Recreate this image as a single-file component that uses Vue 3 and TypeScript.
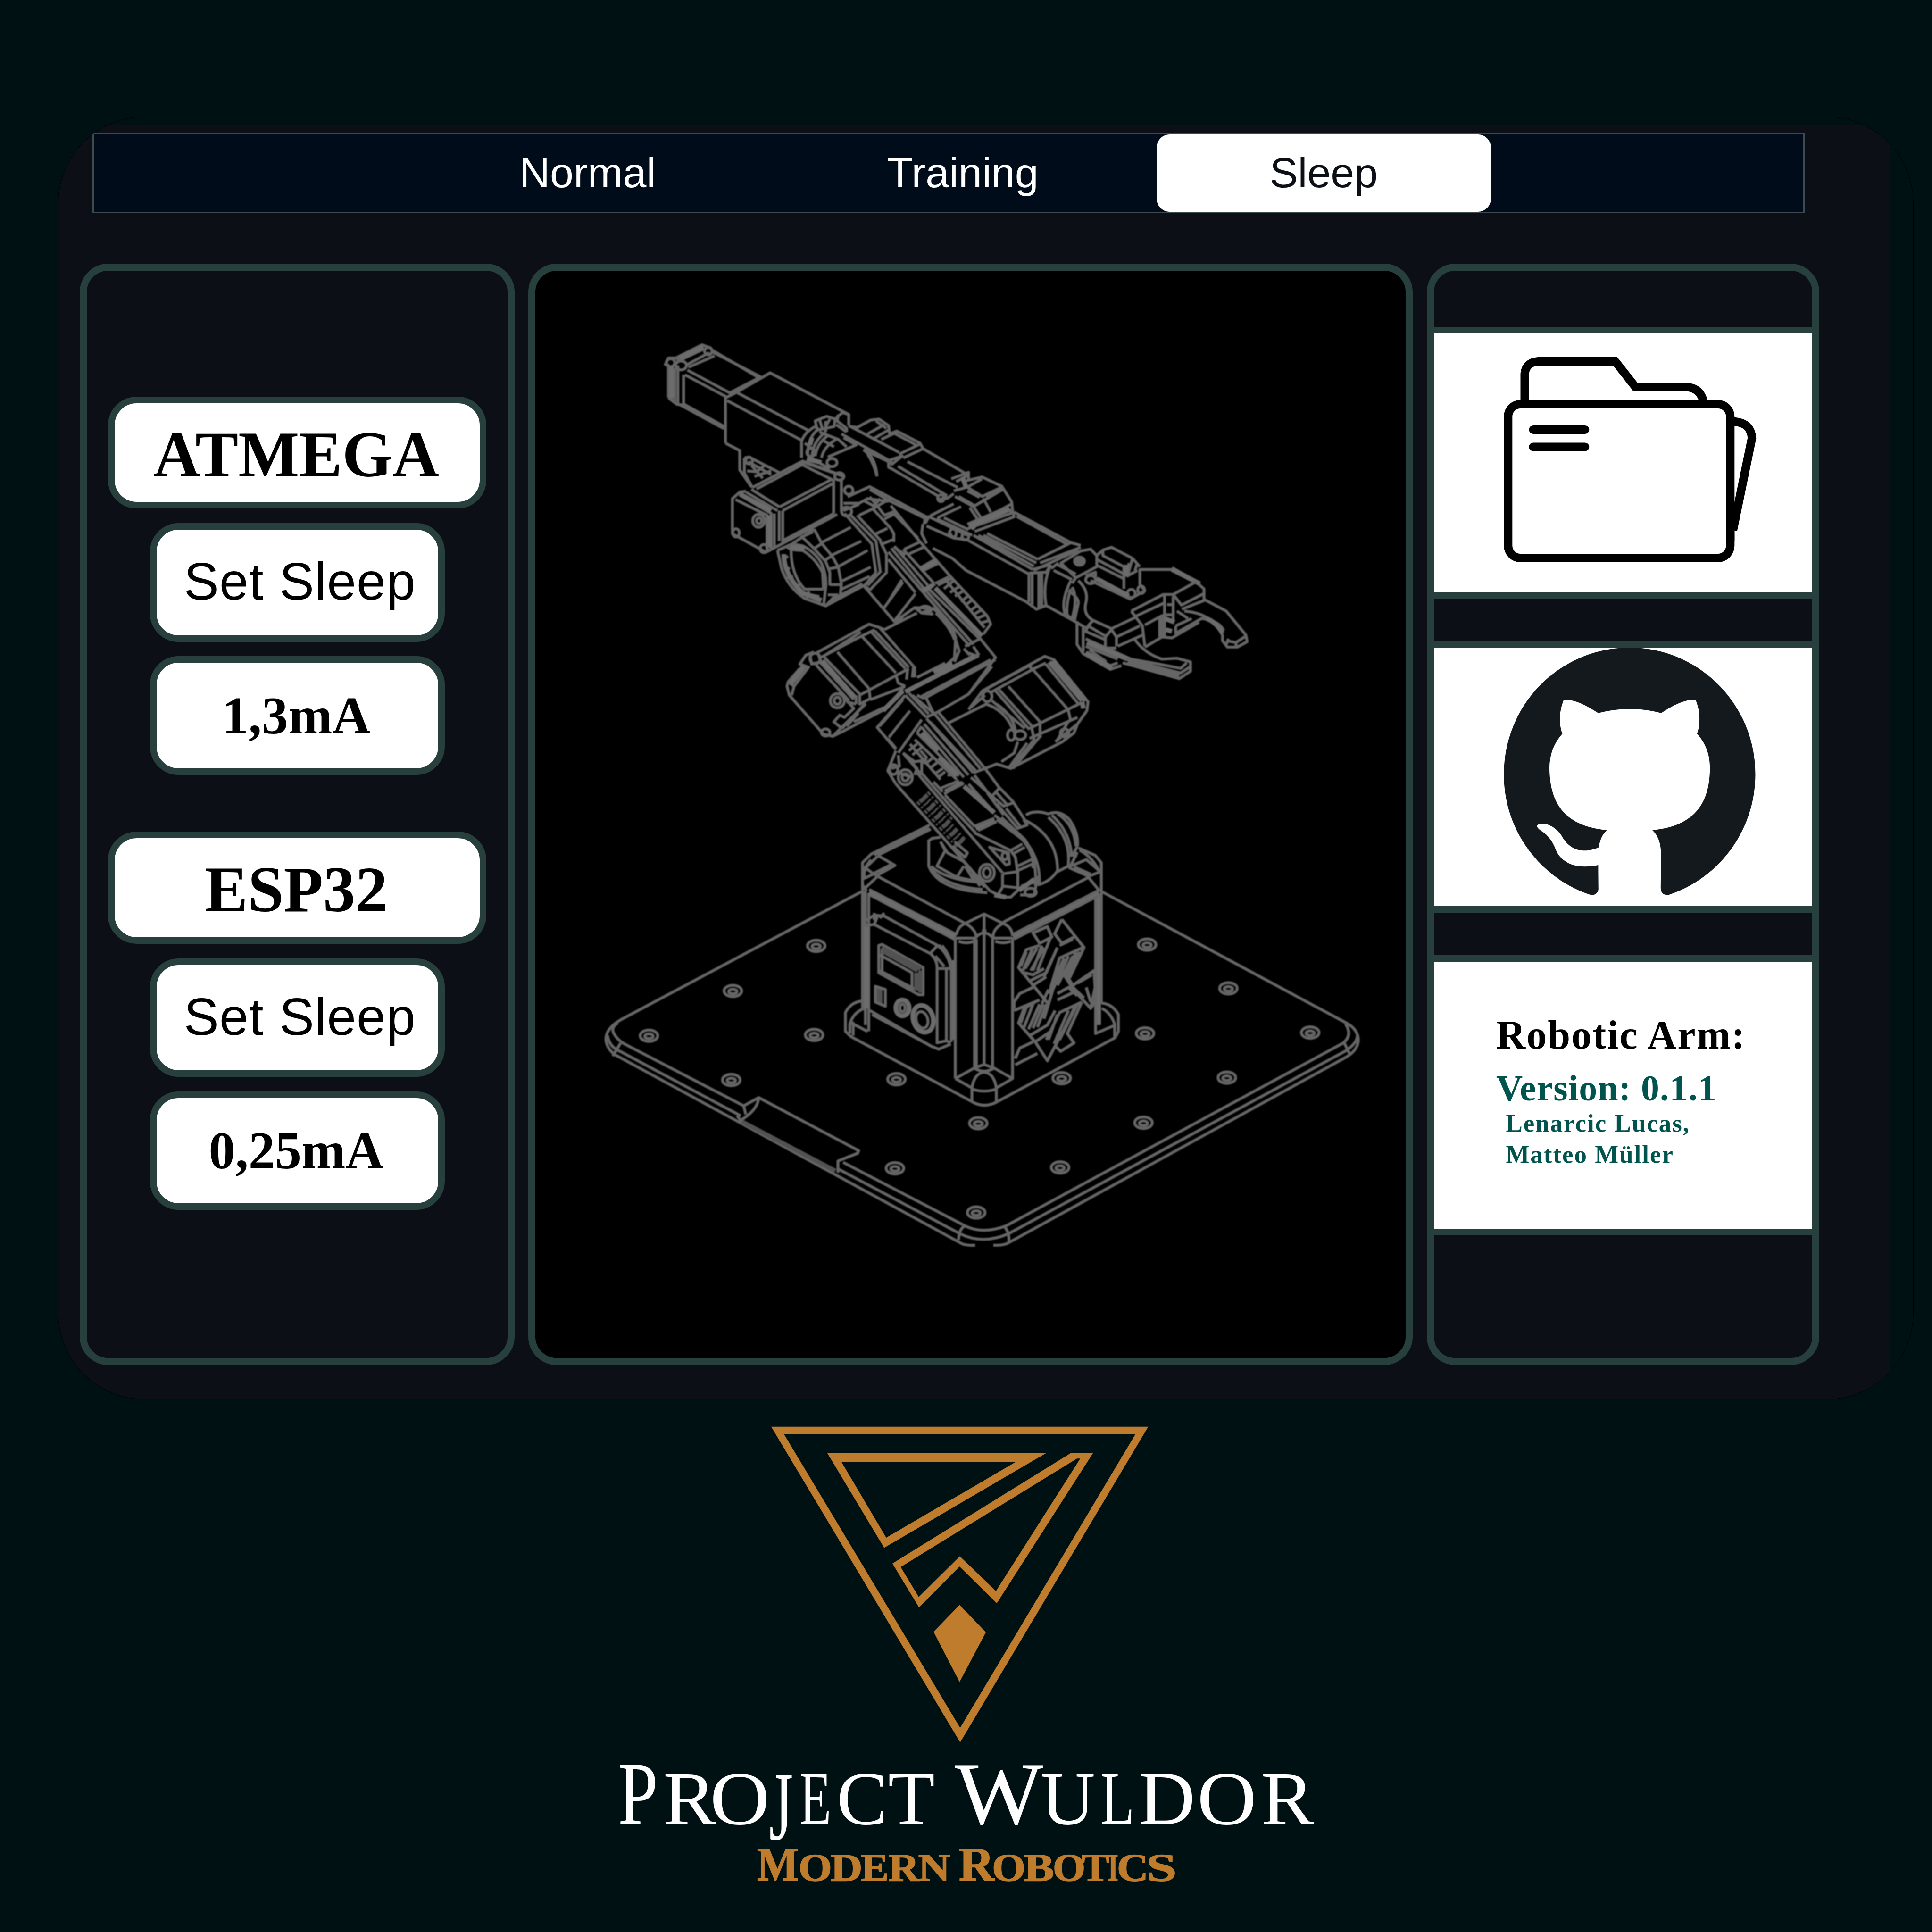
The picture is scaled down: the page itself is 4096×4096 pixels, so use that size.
<script setup lang="ts">
interface Glyph { c: string; x: number; w: number; s: number; y?: number }
interface Unit { name: string; action: string; current: string }

const modes: string[] = ['Normal', 'Training', 'Sleep']
const active = 'Sleep'

const units: Unit[] = [
  { name: 'ATMEGA', action: 'Set Sleep', current: '1,3mA' },
  { name: 'ESP32', action: 'Set Sleep', current: '0,25mA' },
]

const title: Glyph[] = [
  { c: 'P', x: 1599, w: 104, s: 231 }, { c: 'R', x: 1716, w: 137, s: 196 }, { c: 'O', x: 1837, w: 155, s: 196 },
  { c: 'J', x: 1990, w: 62, s: 254, y: 4761 }, { c: 'E', x: 2069, w: 82, s: 196 }, { c: 'C', x: 2165, w: 132, s: 196 },
  { c: 'T', x: 2298, w: 121, s: 196 }, { c: ' ', x: 2425, w: 40, s: 196 }, { c: 'W', x: 2471, w: 228, s: 231 },
  { c: 'U', x: 2693, w: 141, s: 196 }, { c: 'L', x: 2848, w: 88, s: 196 }, { c: 'D', x: 2946, w: 147, s: 196 },
  { c: 'O', x: 3098, w: 154, s: 196 }, { c: 'R', x: 3263, w: 138, s: 196 },
]
const subtitle: Glyph[] = [
  { c: 'M', x: 1959, w: 108, s: 125 }, { c: 'O', x: 2066, w: 87, s: 102 }, { c: 'D', x: 2149, w: 83, s: 102 },
  { c: 'E', x: 2228, w: 72, s: 102 }, { c: 'R', x: 2299, w: 80, s: 102 }, { c: 'N', x: 2376, w: 83, s: 102 },
  { c: ' ', x: 2460, w: 20, s: 102 }, { c: 'R', x: 2481, w: 92, s: 125 }, { c: 'O', x: 2567, w: 87, s: 102 },
  { c: 'B', x: 2650, w: 78, s: 102 }, { c: 'O', x: 2724, w: 85, s: 102 }, { c: 'T', x: 2799, w: 72, s: 102 },
  { c: 'I', x: 2867, w: 27, s: 102 }, { c: 'C', x: 2890, w: 82, s: 102 }, { c: 'S', x: 2966, w: 79, s: 102 },
]

const screws: [number, number][] = [
  [458, 294], [1097, 289], [297, 468], [1254, 458], [135, 641], [454, 638], [1093, 632], [1412, 629], [294, 812],
  [613, 809], [932, 805], [1251, 803], [771, 979], [1090, 977], [610, 1153], [929, 1150], [767, 1324],
]
</script>

<template>
  <div class="page">
    <div class="screen">
      <div class="canvas">
        <nav class="modes">
          <button v-for="m in modes" :key="m" class="mode" :class="[m.toLowerCase(), { active: m === active }]">{{ m }}</button>
        </nav>
        <main class="panels">
          <section class="panel left">
            <div v-for="u in units" :key="u.name" class="unit">
              <div class="pill name"><span>{{ u.name }}</span></div>
              <button class="pill action"><span>{{ u.action }}</span></button>
              <div class="pill value"><span>{{ u.current }}</span></div>
            </div>
          </section>

          <section class="panel view">
            <svg class="arm" viewBox="1387 701 2250 2811">
              <!-- rear motor, shoulder and upper link -->
              <g transform="translate(1650 850) scale(.5421 .4783)">
                <path d="M150 375V200L135 195 150 160 185 160 310 88 350 105 365 130 590 262M165 215V385M180 215V400M195 200V405M222 250V415L190 410 150 375M185 165L315 95M190 180L320 110M240 195L345 130M245 210L370 148M240 225L445 350M228 250L430 372M205 412L415 542M222 408L415 530M355 115L585 268" />
                <ellipse cx="210" cy="200" rx="26" ry="24" /><ellipse cx="160" cy="185" rx="20" ry="22" /><ellipse cx="340" cy="122" rx="18" ry="20" />
                <path class="wide" d="M165 205V375M205 160L315 100" />
                <path d="M422 620V375L475 345 635 240 1010 465V525M475 345L815 550M430 390L785 605M590 262L440 350M422 620L490 660V765L545 855M512 700L535 695 680 780M512 700V780L550 860M530 720L640 790M545 740L600 810M525 770L570 775 610 740M560 800L640 770" />
                <ellipse cx="535" cy="715" rx="16" ry="18" />
                <path d="M550 860L785 720 985 800M570 868L790 735M545 870L680 965M520 885L670 985M680 965L930 815M695 985L940 835M785 735L935 820M938 815V1000M975 810V990M695 985V1165M678 985V1150M520 880L490 885 455 920V1110L615 1210 690 1165 955 1005M490 900L640 1000V1190M470 925L620 1010V1200M655 1000V1180M700 1145L940 1000" />
                <path class="wide" d="M490 895L640 985M632 1010V1185" />
                <ellipse cx="580" cy="1040" rx="28" ry="35" /><ellipse cx="582" cy="1040" rx="12" ry="16" /><ellipse cx="472" cy="1105" rx="16" ry="22" /><ellipse cx="605" cy="1190" rx="18" ry="22" /><ellipse cx="965" cy="800" rx="22" ry="20" />
                <path d="M785 700V610Q800 560 850 530M815 690Q810 590 870 540M835 690Q840 610 900 560M850 690Q860 620 910 580M880 700Q890 640 950 600M910 695L1045 630 985 590M850 500L905 475 945 490 940 530 860 550ZM945 490L980 455 1010 465M960 465L955 500 1000 540V560M950 520L1000 560M870 560L960 600 1000 640M900 500V560M920 490L900 530M870 490L885 545M800 620L850 660M785 715L990 800M830 700L920 760M880 600L940 640" />
                <ellipse cx="930" cy="725" rx="24" ry="22" /><ellipse cx="830" cy="670" rx="20" ry="22" />
                <path class="wide" d="M835 590L825 630M810 705L880 725" />
                <path d="M975 570L1205 715M1010 525L1250 670M1020 530L1050 535 1115 495 1155 490 1200 525 1205 570 1240 555 1350 620 1365 650 1568 785M1225 565L1340 635M1140 500L1190 540M1100 570L1180 520M1130 595L1205 545M1165 600L1240 560M1250 680L1350 625M1270 700L1365 650M1215 735L1265 690 1210 710ZM1225 765L1435 905M1245 745L1480 905M1290 720L1530 860M1480 905L1450 925M1080 655L1115 690Q1140 730 1145 800M1080 655L1200 720M1145 800Q1130 730 1100 680M1200 720V750L1225 765" />
                <ellipse cx="1450" cy="918" rx="16" ry="18" />
                <path d="M1005 910L1110 855 1210 915 1390 1025M1110 870L1210 935 1380 1030M985 945L1060 945 1100 920 1200 935M985 985L1060 950M1060 1010L1125 975 1215 915M1125 975L1210 1080 1225 1110V1155M1150 965L1180 1010 1225 990M1180 1030L1225 1005M1080 930L1130 960 1160 920M1110 910L1140 950" />
                <ellipse cx="1010" cy="875" rx="20" ry="22" /><ellipse cx="1000" cy="990" rx="24" ry="24" />
                <path d="M990 1000L1120 1165 1140 1320M1020 1010L1140 1150 1160 1310M1050 1010L1165 1150M1140 1110L1195 1080M1170 1165L1225 1140M1225 1180L1280 1225M1110 1415L1190 1320V1220L1160 1150M1110 1415L1085 1390M1165 1310L1100 1390" />
                <path d="M670 1200L690 1300Q720 1400 800 1460L900 1500 950 1440M735 1200Q735 1330 800 1410L890 1410M670 1200L740 1165 790 1175Q850 1210 880 1270 905 1330 900 1400L890 1500M700 1220Q700 1330 790 1430L870 1450M715 1180Q730 1200 790 1200 850 1240 885 1320L890 1410M720 1230L700 1250M700 1290L730 1300M715 1350L745 1340M760 1400L780 1380M820 1420L810 1460" />
                <path class="wide" d="M700 1220Q700 1330 790 1430L880 1470M730 1180L800 1190" />
                <path d="M740 1165L845 1085M845 1085L880 1160 930 1230 960 1290 975 1380 970 1440M790 1130L845 1190 900 1260 920 1320 920 1390M885 1155L1020 1075M930 1225L1070 1150M965 1285L1100 1200M980 1365L1115 1290M900 1500L1090 1385M925 1470L1075 1380M975 1410L1110 1340M845 1190L885 1160M900 1250L930 1230M915 1300L960 1290M920 1385L975 1385M780 1130L840 1100M910 1440L960 1440M1085 1390L1140 1320" />
              </g>

              <!-- forearm, wrist and gripper -->
              <g transform="translate(2300 1050) scale(.6378 .4783)">
                <path d="M255 395L325 360V400M275 410L325 375M300 410L380 385 460 435 500 520 505 580M320 440L380 395M265 460L320 440 380 490 460 440M270 490L345 545 460 455M345 545L375 605M330 550L360 610M385 500L415 575M395 490L470 450M405 600L500 530M320 640L480 550 505 580M320 665L500 580M350 680L510 600 505 575M265 475L240 500 205 505M265 530L170 595M295 545L200 605M225 605L325 670M285 490L350 540M320 460L370 495" />
                <path class="wide" d="M300 385L315 440M330 650L490 560M330 640L350 665" />
                <path d="M150 635L165 600 320 700M140 640L135 690 155 745M195 610L340 700M155 650L265 715 320 725M245 680L260 710M300 690V720M165 600L150 605 145 640" />
                <ellipse cx="262" cy="688" rx="14" ry="22" /><ellipse cx="312" cy="708" rx="14" ry="18" />
                <path d="M510 575L740 740M520 598L730 752M400 690L605 830M385 700L600 850M345 700L585 885M365 700L590 868M320 725L570 910M605 830L740 740 780 755M615 850L780 765M590 890L770 780M570 910V1060M583 910V1075M610 910V1090M622 905V1090M585 885L655 860M560 1060L600 1100 640 1080M180 770L260 825 315 890 560 1060M655 870Q625 970 640 1080L755 1165M570 905L640 900 660 860" />
                <path d="M700 850L780 785 820 775 845 810V870L760 930ZM670 890L745 940M680 855L760 910M660 880L690 850M845 810L870 780 905 765 990 825 1020 870M870 780V810L955 870M845 830L970 920 990 825M850 865L955 935M820 945L980 1045 1040 1000 1020 965V880M955 870V990M970 920L1010 890M975 850V920M1010 850L1000 890M1020 885H1145L1250 955 1280 990V1050M1150 875L1265 960M760 930L745 960M800 920L840 900V940" />
                <ellipse class="solid" cx="775" cy="840" rx="20" ry="22" /><ellipse cx="820" cy="940" rx="20" ry="22" /><ellipse cx="985" cy="1015" rx="16" ry="22" /><ellipse cx="1025" cy="995" rx="14" ry="20" />
                <path class="wide" d="M845 935L975 1028M965 860V920M1150 885L1260 960" />
                <path d="M740 945Q700 1050 715 1120L755 1165M745 980Q770 1040 745 1150M770 945Q815 1000 800 1070 790 1130 830 1160L905 1205M730 1000Q775 1040 770 1070L755 1160M740 990Q720 1070 725 1130M830 1160L810 1190 880 1245M905 1205L1000 1145M880 1250L905 1210 925 1250V1300M880 1250V1310M925 1250L1020 1190M930 1300L1030 1240M765 1165V1290L790 1340 900 1425 945 1405M790 1200V1330M800 1260L985 1370M800 1300L930 1370M815 1320L880 1380V1400M755 1165L800 1200M810 1190L800 1220 880 1265M820 1345L900 1405 930 1390M880 1310H925" />
                <path class="wide" d="M805 1280L970 1370M800 1335L905 1420" />
                <path d="M985 1370L1090 1395 1185 1420 1210 1390M950 1390L1180 1475 1225 1435V1385L1170 1365 1110 1370Q1040 1340 1000 1265M960 1370L1185 1445 1225 1410M970 1385L1180 1460" />
                <path d="M985 1110L1115 1020H1155L1190 1080M1000 1140L1120 1065M985 1110L1030 1190 1040 1300M1040 1185L1110 1135V1250L1040 1305M1120 1020V1250M1155 1030V1170M1100 1145V1250M1155 1020L1250 950M1185 1080L1280 1015M1190 1100L1285 1050 1370 1110 1450 1240 1455 1275 1415 1305H1375L1355 1270V1240Q1310 1120 1200 1110M1360 1215Q1340 1160 1270 1150L1165 1230M1370 1270L1410 1280 1450 1245M1370 1290L1380 1260M1410 1300V1280M1165 1190L1230 1150M1165 1190V1235M1110 1250L1150 1255 1260 1170M1120 1130H1160M1130 1075H1160M1170 1110L1215 1150" />
                <path class="wide" d="M1120 1150L1160 1170M1125 1210L1150 1220M1290 1150Q1330 1170 1355 1230" />
                <!-- toothed lower link -->
                <path d="M10 540L125 730 250 920 400 1135 415 1180 385 1235M20 580L120 715M0 790L330 1300M12 770L140 980 345 1290M25 760L160 970M160 985L370 1260M0 830L110 1010M65 775L130 735M85 800L150 760M125 880L190 830M135 895L205 850M190 960L245 925M200 970L255 935M225 990L265 945M250 1010L290 975M270 1030L305 1000M295 1060L325 1025M310 1080L340 1050M330 1110L360 1080M345 1130L375 1105M360 1150L395 1130M375 1175L410 1160M55 940L0 1060M110 1015L20 1170M130 1000L190 965M235 945L390 1200M60 775L185 960" />
                <path class="wide" d="M190 985L380 1245M130 885L195 840M140 1000L180 970" />
              </g>

              <!-- elbow with its two motors, lower arm -->
              <g transform="translate(1950 1500) scale(.6059 .574)">
                <path d="M475 30L605 190M560 125L640 10M905 300L970 265 1035 350 920 515 790 595M920 330L960 345 655 500M940 300L965 340M1035 360L730 535M1015 360L720 525M1020 390L920 515M605 190L690 125 770 130Q850 200 865 260L860 350 830 380M720 150L770 155M690 125L720 150 760 130M560 225L700 150M780 150Q840 210 860 270M865 270L880 320 860 370M820 375L700 440M900 310L925 340M640 165L610 190" />
                <ellipse cx="735" cy="135" rx="26" ry="16" />
                <path class="wide" d="M650 505L945 345M770 415L850 375" />
                <path d="M560 225L540 215 495 200 270 330M540 215L685 390 680 440M280 355L470 250 520 225M300 345L460 235M465 255L610 420M520 230L665 395M505 235L650 400M360 325L495 490M305 350L460 520M285 370L430 540M270 385L410 545M455 520L665 400M610 430L620 465 650 480M660 400L655 450M495 490L500 535 455 560V520M500 540L650 480M260 325L225 340 200 380 240 395M280 340L290 370 250 380 245 350M240 390L175 480 150 460 145 480 155 520 300 695 340 705 380 685 560 585M225 395L160 475M200 400L150 460M175 480L165 520M440 520V560M690 390V440" />
                <ellipse cx="360" cy="545" rx="30" ry="32" /><ellipse cx="360" cy="545" rx="14" ry="16" /><ellipse cx="310" cy="688" rx="18" ry="16" /><ellipse cx="265" cy="355" rx="22" ry="24" />
                <path d="M390 530L430 580 390 620 370 610 345 640 380 670M480 555L380 670M450 600L400 660M400 550L440 560M340 705L480 560M430 640L560 575M560 590L640 490" />
                <path class="wide" d="M295 365L435 530M215 390L160 470M640 500L555 590" />
                <path d="M650 520L530 665 610 765M640 540L540 660M670 590L580 710M720 630L620 780M650 520L740 620M665 510L750 605M680 520L770 600M740 620L790 595 990 850M740 535L770 600M730 535L700 520M575 715L610 760" />
                <path d="M835 645L995 560Q1080 590 1110 680M920 585L980 500 1245 345 1285 360 1430 550 1425 590 1385 650 1370 690 1320 730 1100 850 1040 830 990 850M1000 490L1190 380M1010 510L1200 400 1250 375M1035 500L1180 675M1050 495L1195 665M1090 480L1225 640V690M1195 405L1345 585M1180 390L1200 410M1250 380L1390 560M1180 670L1400 555M1180 715L1385 620M1345 585L1355 630M1020 545L1160 670M1040 560Q1110 610 1120 680M1190 670L1200 720 1110 840M1130 730L1115 780 1060 820M1170 735L1090 850M1230 700L1110 850M1385 650L1290 730M1345 640L1300 720M930 575L990 520" />
                <path class="wide" d="M1265 370L1405 545M1280 365L1418 545M1405 550L1410 580" />
                <ellipse cx="1000" cy="525" rx="20" ry="24" /><ellipse cx="1140" cy="700" rx="24" ry="20" /><ellipse cx="1102" cy="700" rx="16" ry="24" /><ellipse cx="1330" cy="690" rx="18" ry="18" />
                <path d="M740 625L940 870M755 640L950 860M730 650L920 880M720 665L900 890M775 605L970 850M940 870L990 850 1050 935 1110 1000 1165 1090M920 920L1030 1050M930 890L1020 975 1050 940M945 880L1010 970M1020 975L1070 1020 1110 1005M1040 1010L1130 1120 1170 1105 1155 1080M1080 1030L1140 1110M1000 960L1070 1060M1040 960L1090 1020" />
                <path d="M640 780L720 880M610 770L575 860 610 920M590 850L625 840 620 790M665 770L700 740M680 790L720 755M735 830L770 800M755 850L790 820M775 875L810 850M790 890L820 865M700 690L880 880M690 720L870 900M670 740L800 900M640 780L690 820 720 815V870M660 800L700 850 690 880M620 870L680 890M715 770L740 800 730 830M830 880L880 880M700 690L720 660" />
                <ellipse cx="650" cy="890" rx="30" ry="34" /><ellipse cx="650" cy="890" rx="14" ry="16" /><ellipse cx="600" cy="855" rx="18" ry="22" />
                <path class="wide" d="M720 690L790 770M795 800L870 880M900 930L1030 1050M820 955L895 915M950 1120L1030 1080" />
                <path d="M610 920L1010 1400M700 870L1065 1320M715 865L830 1005 950 1140M770 910L810 955M815 965L900 915M800 940L880 905M820 970L945 1110 1030 1075M960 1130L1040 1090M945 1140L1100 1220M1030 1060L1140 1150Q1230 1250 1222 1370M1040 1080L1150 1170Q1215 1250 1205 1380M1060 1070L1160 1170Q1200 1230 1195 1300" />
                <path class="vents" d="M710 990L885 1200M722 980L895 1185M735 965L905 1170M745 955L850 1080M700 1000L870 1205M716 985L890 1192M728 972L900 1178" />
                <path d="M860 1180L915 1230 905 1250 850 1200" />
                <path d="M745 1180L765 1165 800 1160M750 1180V1290Q790 1400 1000 1410M760 1290Q820 1350 960 1362M760 1305Q830 1385 980 1395M820 1220L785 1290 870 1340 900 1290M800 1180L830 1230 900 1270 990 1385M870 1340L960 1360M905 1290L940 1350M930 1325L970 1380M800 1180L820 1220" />
                <path d="M1065 1325V1385L1045 1420 1010 1400 1060 1430H1100L1130 1400V1315L1065 1325M1065 1380L1130 1388M1100 1220L1120 1250 1130 1320M1100 1220L1150 1190M1110 1235L1160 1205M1130 1290L1190 1260M1130 1310L1195 1280M1130 1395L1215 1340 1200 1420H1140M1145 1380L1210 1360M1010 1205L1090 1230 1095 1280 1080 1285Z" />
                <path class="wide" d="M1135 1400L1200 1350M1030 1420L1080 1430" />
                <ellipse cx="998" cy="1320" rx="32" ry="38" /><ellipse cx="998" cy="1320" rx="16" ry="22" /><ellipse cx="1075" cy="1245" rx="12" ry="16" /><ellipse cx="1185" cy="1408" rx="24" ry="18" />
                <path d="M1165 1060Q1200 1035 1260 1055 1310 1035 1350 1080 1390 1140 1385 1200M1165 1085Q1300 1160 1300 1310 1270 1360 1215 1375M1260 1070Q1360 1160 1345 1290L1300 1315M1275 1060Q1350 1130 1360 1240M1300 1055Q1370 1100 1378 1200M1385 1200L1370 1230 1350 1240" />
              </g>

              <!-- pedestal -->
              <g transform="translate(2100 2050) scale(.574 .5421)">
                <path d="M535 155L270 295 232 335V1030M540 175L300 300M530 165L285 298M300 300L378 348 290 400M360 345L285 385M300 305L245 360 290 395M270 320L240 365V410L290 385M245 455L300 400 695 625M232 440L250 470M262 463L655 678M262 487L648 702M245 470V1110M260 480V1140M232 395L245 370" />
                <path class="wide" d="M262 475L652 690M1298 478L912 692M1296 490V1110M250 640V1030M645 800V1180" />
                <path d="M1205 265L1280 300 1308 335V1010M1200 285L1165 360 1250 400 1300 380M1185 355L1260 390M1175 350L1240 320 1300 375M1210 275Q1270 310 1300 380M1250 405L865 620M1250 405L1300 470M1300 465L905 680M1300 490L915 700M1282 500V1150L1370 1110M1308 380V470M1165 300H1200" />
                <path d="M655 680Q660 640 695 625L780 580 865 625Q905 640 908 685M695 625Q740 650 745 690M865 625Q820 650 820 690M780 580V1300M650 690V1365M737 700V1320M818 700V1320M745 700V1310M908 690V1365M655 695H740Q780 645 820 695H905M665 710Q700 725 735 710M830 710Q865 725 900 710M770 660H790M650 1365L735 1315 780 1298 825 1315 908 1365 835 1410M650 1365L725 1410Q735 1340 780 1335 825 1340 835 1410V1475M725 1410V1475M725 1415Q780 1435 835 1415M725 1475Q780 1510 840 1475M735 1315Q780 1345 825 1315" />
                <path d="M725 1475L180 1165 155 1140V1050Q180 1000 230 995M175 1150V1105Q190 1050 240 1030M190 1105L255 1140M175 1105L190 1100V1160M840 1475L1370 1170 1385 1140V1060Q1360 1010 1310 1005M1368 1165V1105Q1350 1050 1310 1030" />
                <path d="M265 1040L540 1210 575 1225 630 1200M275 1060L550 1215M250 610L285 585 330 590 570 730M285 630L540 770Q568 800 568 835V1200M245 635L285 630 300 590M285 575V610M310 600L330 575M540 765L570 730Q620 770 630 840H575M590 730Q630 780 632 830M580 725V745M560 780L600 830M610 840V1190M632 830V1190M565 1195L610 1185 630 1195M305 730L320 725 505 835V965L485 965 305 860ZM320 750V855M310 775L455 860V940M310 850L470 940" />
                <path class="hatch" d="M318 740L495 842M322 757L480 850M492 850V955M474 860V945M312 935V1010M300 930V1000" />
                <path d="M290 925L335 940V1020L290 1000Z" />
                <ellipse class="wide" cx="412" cy="1028" rx="30" ry="38" /><ellipse cx="412" cy="1028" rx="12" ry="18" />
                <ellipse class="wide" cx="505" cy="1080" rx="45" ry="65" transform="rotate(-14 505 1080)" /><ellipse cx="500" cy="1085" rx="26" ry="40" transform="rotate(-14 500 1085)" />
                <path class="medium" d="M1130 605L1230 740 1165 885M1130 605L1095 680M1000 670L1065 640 1085 690 1030 720ZM1095 670L1130 720 1185 690M1120 730L1180 700M1030 730L970 750 935 835 985 900 1060 860 1110 740M1020 740L965 840M1050 740L990 850M1080 690L1020 850M1110 740L1050 880M960 860L1000 870 1050 840M1225 740L1120 790 1080 930M1160 780L1090 940M1180 780L1110 920M1210 760L1155 880 1180 920 1275 850 1280 930 1260 1030M1200 910L1265 870M1000 920L1060 880M985 900L1070 1010M915 1030V1000L940 960 1000 930M915 1040L1030 990M1070 940L1040 1010M1110 990L1190 950 1260 1030 1285 990M1110 960L1160 930 1200 970M1010 1000L960 1030 935 1100 985 1160 1065 1110 1100 1040M1000 1010L960 1120M1030 1010L980 1130M1060 1010L1020 1120M1090 940L1050 1080M1220 1000L1120 1050 1060 1180M1220 1000L1155 1150 1185 1195 1125 1235 1100 1210M1190 1020L1140 1130 1065 1280 1010 1190 1080 1140M1160 1040L1095 1200M1010 1190L985 1160M920 1300L1020 1245M920 1270L940 1220 1000 1190M1140 870L1170 920 1230 980M1240 930L1260 1000M1195 760L1140 880M970 760L945 830M1000 740L955 850M1040 730L1000 850M1140 790L1070 960M1200 1010L1120 1180M970 1025L945 1100M1045 1010L1000 1125M1110 1060L1070 1180" />
              </g>

              <!-- mounting plate -->
              <g transform="translate(1500 2250) scale(1.3393 .6696)">
                <path d="M545 85L80 580Q50 615 52 660 55 695 70 715L300 965 740 1445Q750 1452 765 1450M75 592Q60 610 68 635 75 660 90 675L318 912M55 640Q58 685 80 702L312 950M65 720L80 670M318 912L347 880 540 1085 538 1095 500 1125V1170M318 912L322 945M347 880Q345 930 310 970M305 950L315 975M510 1130L745 1375M500 1155L735 1405M745 1375Q780 1410 825 1375M735 1405Q780 1450 830 1405M745 1375Q733 1390 733 1430M820 1375Q832 1400 830 1435M1010 85L1480 590Q1505 615 1505 660 1503 700 1480 725L830 1440Q820 1452 800 1450M825 1375L1475 670Q1495 640 1480 595M830 1405L1480 700Q1503 670 1503 640M1478 670L1490 718" />
                <path class="hatch" d="M315 973L495 1163" />
                <g v-for="(s, i) in screws" :key="i">
                  <ellipse :cx="s[0]" :cy="s[1]" rx="17" ry="22" />
                  <ellipse :cx="s[0]" :cy="s[1] + 2" rx="8" ry="9" />
                </g>
              </g>
            </svg>
          </section>

          <section class="panel right">
            <div class="card">
              <svg class="folder" viewBox="3712 863 978 668">
                <path d="M3947 1046V967Q3950 938 3982 935H4181L4234 1002H4370Q4402 1006 4410 1040" />
                <path d="M4480 1091H4490Q4533 1095 4535 1134L4486 1372" />
                <path class="seam" d="M4478 1330L4490 1340V1400L4478 1432Z" />
                <rect x="3904" y="1046" width="575" height="398" rx="32" />
                <path d="M3969 1112H4103M3969 1156.500H4103" stroke-linecap="round" />
              </svg>
            </div>
            <div class="card">
              <svg class="github" viewBox="0 0 98 96">
                <path fill-rule="evenodd" d="M48.854 0C21.839 0 0 22 0 49.217c0 21.756 13.993 40.172 33.405 46.69 2.427.49 3.316-1.059 3.316-2.362 0-1.141-.08-5.052-.08-9.127-13.59 2.934-16.42-5.867-16.42-5.867-2.184-5.704-5.42-7.17-5.42-7.17-4.448-3.015.324-3.015.324-3.015 4.934.326 7.523 5.052 7.523 5.052 4.367 7.496 11.404 5.378 14.235 4.074.404-3.178 1.699-5.378 3.074-6.6-10.839-1.141-22.243-5.378-22.243-24.283 0-5.378 1.94-9.778 5.014-13.2-.485-1.222-2.184-6.275.486-13.038 0 0 4.125-1.304 13.426 5.052a46.97 46.97 0 0 1 12.214-1.63c4.125 0 8.33.571 12.213 1.63 9.302-6.356 13.427-5.052 13.427-5.052 2.67 6.763.97 11.816.485 13.038 3.155 3.422 5.015 7.822 5.015 13.2 0 18.905-11.404 23.06-22.324 24.283 1.78 1.548 3.316 4.481 3.316 9.126 0 6.6-.08 11.897-.08 13.526 0 1.304.89 2.853 3.316 2.364 19.412-6.52 33.405-24.935 33.405-46.691C97.707 22 75.788 0 48.854 0z" />
              </svg>
            </div>
            <div class="card info">
              <div class="product">Robotic Arm:</div>
              <div class="version">Version: 0.1.1</div>
              <div class="author">Lenarcic Lucas,</div>
              <div class="author">Matteo Müller</div>
            </div>
          </section>
        </main>
      </div>
    </div>

    <svg class="emblem" viewBox="0 100 1568 1405" preserveAspectRatio="none">
      <path d="M126 152H1401L765 1500ZM169 183L765 1438 1358 183Z" />
      <path d="M316 265H1055L508 669ZM364 303L515 626 952 303Z" />
      <path d="M536 736L1138 265H1214L889 906 763 749 626 924ZM564 751L625 879 764 705 886 854 1171 288H1160Z" />
      <path d="M763 913L852 1030 763 1242 675 1028Z" />
    </svg>
    <svg class="wordmark" viewBox="1500 4512 2000 440">
      <text class="title" y="4721"><tspan v-for="(g, i) in title" :key="i" :x="g.x" :y="g.y ?? 4721" :font-size="g.s" :textLength="g.w" lengthAdjust="spacingAndGlyphs">{{ g.c }}</tspan></text>
      <text class="subtitle" y="4867"><tspan v-for="(g, i) in subtitle" :key="i" :x="g.x" y="4867" :font-size="g.s" :textLength="g.w" lengthAdjust="spacingAndGlyphs">{{ g.c }}</tspan></text>
    </svg>
  </div>
</template>

<style>
html { font-size: 81.92px; }
body { margin: 0; background: #001114; }
</style>

<style scoped>
* { box-sizing: border-box; }
.page {
  width: 50rem;
  height: 50rem;
  overflow: hidden;
  padding-top: 3.01rem;
  background: #001114;
  display: flex;
  flex-direction: column;
}
.screen {
  flex: none;
  width: 48.02rem;
  height: 33.21rem;
  margin-left: 1.5rem;
  padding-top: .2rem;
  border: 1.5px solid #000;
  border-radius: 2.24rem;
  overflow: hidden;
}
.canvas {
  width: 47.4rem;
  height: 33.1rem;
  padding: .215rem 0 0 .555rem;
  background: #0d0f17;
}
.modes {
  display: flex;
  align-items: stretch;
  width: 44.32rem;
  height: 2.08rem;
  margin-left: .32rem;
  padding-left: 8.46rem;
  border: .04rem solid #3d4a4f;
  background: #000c1a;
}
.mode {
  width: 8.65rem;
  padding: 0;
  border: 0;
  border-radius: .34rem;
  background: none;
  color: #fff;
  font: 1.095rem "Liberation Sans", Arial, sans-serif;
}
.training { margin-left: 1.06rem; }
.sleep { margin-left: .69rem; }
.mode.active { background: #fff; color: #0d0f16; }

.panels { display: flex; margin-top: 1.305rem; height: 28.5rem; }
.panel {
  height: 28.5rem;
  border: .19rem solid #28403d;
  border-radius: .74rem;
  background: #0c0f16;
  overflow: hidden;
}
.left {
  width: 11.25rem;
  padding-top: 3.26rem;
  display: flex;
  flex-direction: column;
  gap: 1.47rem;
}
.unit { display: flex; flex-direction: column; align-items: center; gap: .375rem; }
.pill {
  display: flex;
  align-items: center;
  justify-content: center;
  width: 7.63rem;
  height: 3.07rem;
  padding: 0 .05rem 0 0;
  border: .18rem solid #28403d;
  border-radius: .74rem;
  background: #fff;
  color: #000;
  font: bold 1.37rem "Liberation Serif", "Times New Roman", serif;
}
.name { width: 9.79rem; height: 2.9rem; font-size: 1.67rem; padding-top: .1rem; }
.action {
  font: 1.355rem "Liberation Sans", Arial, sans-serif;
  letter-spacing: .015rem;
  padding: 0 0 .04rem .14rem;
}
.view { width: 22.88rem; margin-left: .36rem; background: #000; }
/* the drawing has soft, slightly feathered strokes */
.arm { display: block; width: 100%; height: 100%; fill: none; stroke: #656565; stroke-linejoin: round; filter: blur(1.2px); }
.arm path, .arm ellipse { vector-effect: non-scaling-stroke; stroke-width: 6.2px; }
.arm .wide { stroke-width: 10px; stroke: #6c6c6c; }
.arm .hatch { stroke-width: 9px; stroke: #525252; }
.arm .medium { stroke-width: 6.5px; }
.arm .solid { fill: #656565; }
.arm .vents { stroke-dasharray: 9 5 4 6; stroke: #505050; stroke-width: 5px; }

.right { width: 10.16rem; margin-left: .37rem; padding-top: 1.45rem; }
.card {
  height: 7.03rem;
  margin-bottom: 1.1rem;
  border: solid #28403d;
  border-width: .175rem 0;
  background: #fff;
}
.folder { display: block; width: 9.78rem; height: 6.68rem; fill: none; stroke: #000; stroke-width: 22; }
.folder .seam { fill: #000; stroke: none; }
.github { display: block; width: 6.54rem; height: 6.4rem; margin-left: 1.81rem; fill: #14191d; }
.info {
  height: 7.26rem;
  padding: 1.24rem 0 0 1.61rem;
  font-family: "Liberation Serif", "Times New Roman", serif;
  font-weight: bold;
  color: #00544d;
  white-space: nowrap;
}
.product { font-size: 1.05rem; line-height: 1.34rem; letter-spacing: .026rem; color: #000; }
.version { margin-top: .21rem; font-size: .95rem; line-height: 1rem; letter-spacing: .013rem; }
.author { margin-left: .25rem; font-size: .645rem; line-height: .8rem; letter-spacing: .025rem; }

.emblem { flex: none; display: block; width: 12rem; height: 8.513rem; margin: .386rem 0 0 19rem; fill: #bf7c2c; fill-rule: evenodd; }
.wordmark { flex: none; display: block; width: 20rem; height: 4.4rem; margin-left: 15rem; font-family: "Liberation Serif", "Times New Roman", serif; white-space: pre; }
.title { fill: #fff; }
.subtitle { fill: #bf7c2c; font-weight: bold; stroke: #bf7c2c; stroke-width: 2; }
</style>
